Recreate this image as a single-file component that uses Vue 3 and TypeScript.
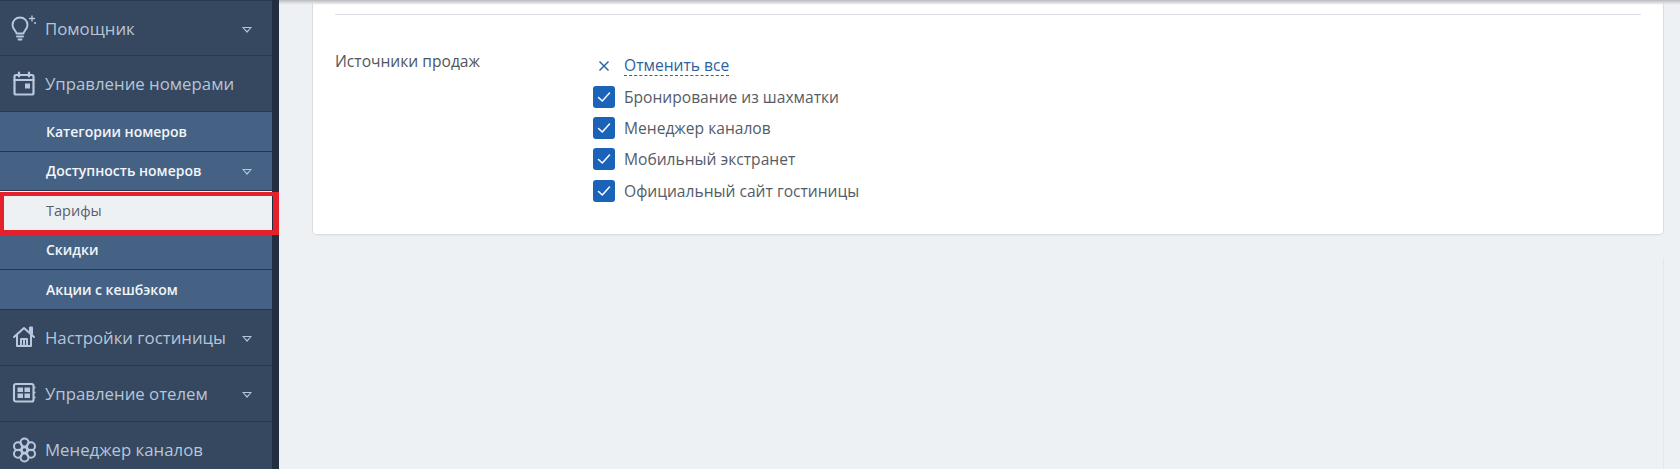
<script setup lang="ts">
const subs = ['Категории номеров', 'Доступность номеров', 'Тарифы', 'Скидки', 'Акции с кешбэком']
const sources = ['Бронирование из шахматки', 'Менеджер каналов', 'Мобильный экстранет', 'Официальный сайт гостиницы']
</script>

<template>
  <div class="page">
    <aside class="sidebar">
      <nav class="menu">
        <div class="item first">
          <svg class="ico" viewBox="0 0 26 26" fill="none" stroke="currentColor" stroke-width="1.900" stroke-linecap="round" stroke-linejoin="round">
            <path d="M6.500 18.500c0-2.500-4-3.800-4-8.500a7.500 7.500 0 0 1 15 0c0 4.700-4 6-4 8.500z" />
            <path d="M7 21.500h6M8.500 24.500h3" />
            <path d="M22 1v5M19.500 3.500h5" stroke-width="1.300" />
            <circle cx="25" cy="8" r=".6" fill="currentColor" stroke-width=".8" />
          </svg>
          <span class="label">Помощник</span>
          <i class="caret"></i>
        </div>
        <div class="item">
          <svg class="ico" viewBox="0 0 26 26" fill="none" stroke="currentColor" stroke-width="2.200" stroke-linecap="round" stroke-linejoin="round">
            <rect x="4.500" y="4" width="19" height="19.500" rx="1.500" />
            <path d="M4.500 9h19M9 1.500v4M19 1.500v4" />
            <rect x="15" y="12.500" width="5" height="5" fill="currentColor" stroke="none" />
          </svg>
          <span class="label">Управление номерами</span>
        </div>
        <div
          v-for="s in subs"
          :key="s"
          class="sub"
          :class="{ active: s === 'Тарифы' }"
        >
          <span>{{ s }}</span>
          <i v-if="s === 'Доступность номеров'" class="caret"></i>
          <div v-if="s === 'Тарифы'" class="mark"></div>
        </div>
        <div class="item">
          <svg class="ico" viewBox="0 0 26 26" fill="none" stroke="currentColor" stroke-width="2" stroke-linecap="round" stroke-linejoin="round">
            <path d="M4 13 14 4l10 9" />
            <path d="M20 8V3.500h2V10" />
            <path d="M7 11v11h14V11" />
            <path d="M11 22v-7h6v7M14 15v7" />
          </svg>
          <span class="label">Настройки гостиницы</span>
          <i class="caret"></i>
        </div>
        <div class="item">
          <svg class="ico" viewBox="0 0 26 26" fill="none" stroke="currentColor" stroke-width="2.100" stroke-linejoin="round">
            <rect x="4" y="4" width="19.500" height="17.500" rx="1.800" />
            <rect x="7.500" y="7.500" width="5.500" height="4.500" fill="currentColor" stroke="none" />
            <rect x="14.500" y="7.500" width="5.500" height="4.500" fill="currentColor" stroke="none" />
            <rect x="7.500" y="13.500" width="5.500" height="4.500" fill="currentColor" stroke="none" />
            <rect x="14.500" y="13.500" width="5.500" height="4.500" fill="currentColor" stroke="none" />
            <path d="M23.500 7.500h2M23.500 12.500h2M23.500 17.500h2" stroke-width="1.500" />
          </svg>
          <span class="label">Управление отелем</span>
          <i class="caret"></i>
        </div>
        <div class="item">
          <svg class="ico" viewBox="0 0 26 26" fill="none" stroke="currentColor" stroke-width="2">
            <circle cx="14.500" cy="13" r="2.800" />
            <circle cx="14.500" cy="5.500" r="4" />
            <circle cx="14.500" cy="20.500" r="4" />
            <circle cx="8" cy="9.200" r="4" />
            <circle cx="21" cy="9.200" r="4" />
            <circle cx="8" cy="16.800" r="4" />
            <circle cx="21" cy="16.800" r="4" />
          </svg>
          <span class="label">Менеджер каналов</span>
        </div>
      </nav>
      <div class="strip"></div>
    </aside>

    <main class="content">
      <section class="card">
        <div class="divider"></div>
        <div class="row">
          <div class="title">Источники продаж</div>
          <div class="options">
            <div class="option cancel">
              <svg class="x" viewBox="0 0 12 12" fill="none" stroke="currentColor" stroke-width="1.500">
                <path d="M1.500 1.500l9 9M10.500 1.500l-9 9" />
              </svg>
              <span class="link">Отменить все</span>
            </div>
            <label v-for="s in sources" :key="s" class="option">
              <span class="box">
                <svg viewBox="0 0 22 22" fill="none" stroke="#fff" stroke-width="1.500" stroke-linecap="round" stroke-linejoin="round">
                  <path d="M5.500 11.500l3.800 3.500 7.200-8" />
                </svg>
              </span>
              <span>{{ s }}</span>
            </label>
          </div>
        </div>
      </section>
      <div class="track"></div>
    </main>
  </div>
</template>

<style>
html, body {
  margin: 0;
  background: #eef1f4;
  overflow: hidden;
}
</style>

<style scoped>
.page {
  display: flex;
  width: 1680px;
  height: 469px;
  overflow: hidden;
  background: #eef1f4;
  font-family: "Open Sans", "Noto Sans", sans-serif;
}
.sidebar {
  display: flex;
  flex: 0 0 279px;
  height: 469px;
  background: #34475f;
}
.menu {
  flex: 0 0 272px;
}
.strip {
  flex: 0 0 7px;
  background: #232f41;
}
.item {
  display: flex;
  align-items: center;
  box-sizing: border-box;
  height: 56.200px;
  padding-left: 10px;
  color: #b9c8dc;
  border-bottom: 1px solid #29394e;
  background: #35485f;
}
.item.first {
  height: 56px;
  border-top: 1px solid #29394e;
}
.ico {
  flex: none;
  width: 26px;
  height: 26px;
  margin-right: 9px;
}
.label {
  font-size: 16.800px;
  white-space: nowrap;
  color: #b7c5d9;
}
.caret {
  position: relative;
  flex: none;
  width: 0;
  height: 0;
  margin-left: auto;
  margin-right: 20px;
  margin-top: 3px;
  border-left: 5.500px solid transparent;
  border-right: 5.500px solid transparent;
  border-top: 6px solid #b7c5d9;
}
.caret::after {
  content: "";
  position: absolute;
  left: -3px;
  top: -5px;
  border-left: 3px solid transparent;
  border-right: 3px solid transparent;
  border-top: 3.200px solid #35485f;
}
.sub .caret::after {
  border-top-color: #456284;
}
.sub {
  position: relative;
  display: flex;
  align-items: center;
  box-sizing: border-box;
  height: 39.500px;
  padding-left: 46px;
  font-size: 14px;
  font-weight: 600;
  color: #f2f5f9;
  background: #456284;
  border-bottom: 1px solid #26364d;
}
.sub.active {
  z-index: 1;
  font-size: 14.500px;
  font-weight: 400;
  color: #5a6068;
  background: #eef1f4;
  border-bottom: 0;
}
.mark {
  position: absolute;
  left: 0;
  top: 1px;
  box-sizing: border-box;
  width: 279px;
  height: 43px;
  border: solid #e4202b;
  border-width: 4px 6px 5px 4px;
  pointer-events: none;
}
.content {
  position: relative;
  flex: 1;
  min-width: 0;
  padding: 0 16px 0 33px;
}
.card {
  box-sizing: border-box;
  height: 235px;
  background: #fff;
  border: 1px solid #d9dce1;
  border-top: 0;
  border-radius: 0 0 5px 5px;
  padding: 14px 22px 0 22px;
  box-shadow: 0 3px 3px -3px rgba(0, 0, 0, 0.08);
}
.content::before {
  content: "";
  position: absolute;
  left: 0;
  right: 0;
  top: 0;
  height: 5px;
  background: linear-gradient(#b9bbbe, #dcdde0 55%, rgba(255, 255, 255, 0));
}
.divider {
  height: 1px;
  background: #dcdfe3;
}
.row {
  display: flex;
  padding-top: 34px;
}
.title {
  flex: 0 0 258px;
  font-size: 15.600px;
  line-height: 24px;
  color: #4e5661;
}
.options {
  display: flex;
  flex-direction: column;
}
.option {
  display: flex;
  align-items: center;
  height: 31.300px;
  font-size: 15.600px;
  color: #555c67;
  white-space: nowrap;
}
.cancel {
  height: 31px;
  margin-top: 1px;
}
.x {
  width: 12px;
  height: 12px;
  margin: 0 14px 0 5px;
  color: #2a68ad;
}
.link {
  color: #2b629f;
  border-bottom: 1px dashed #2b629f;
  line-height: 20px;
}
.box {
  flex: none;
  width: 22px;
  height: 22px;
  margin-right: 9px;
  border-radius: 3px;
  background: #1a63b9;
}
.box svg {
  display: block;
  width: 22px;
  height: 22px;
}
.track {
  position: absolute;
  top: 258px;
  bottom: 0;
  left: 1384px;
  width: 1px;
  background: #e3e6ea;
}
</style>
